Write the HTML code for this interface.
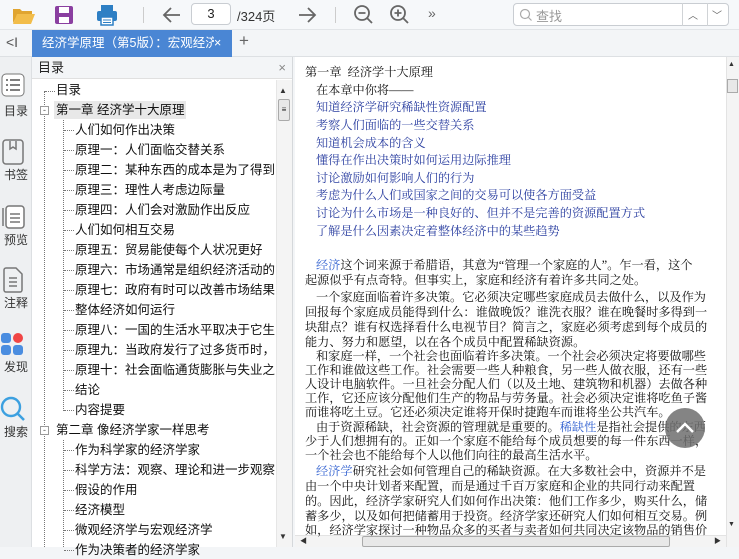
<!DOCTYPE html>
<html><head><meta charset="utf-8"><style>
*{margin:0;padding:0;box-sizing:border-box}
body{width:739px;height:547px;overflow:hidden;background:#f3f5f7;font-family:"Liberation Sans","Noto Sans CJK SC",sans-serif;position:relative;font-size:12px;color:#222}
.abs{position:absolute}
#tb{left:0;top:0;width:739px;height:30px;background:#f6f8fa;border-bottom:1px solid #e2e5e8}
#tabs{left:0;top:30px;width:739px;height:27px;background:#f3f5f7;border-bottom:1px solid #dde0e3}
#tab{left:32px;top:30px;width:200px;height:27px;background:#4a86d4;color:#fff;font-size:12.5px;line-height:27px;padding-left:10px;white-space:nowrap;overflow:hidden}
#rail{left:0;top:57px;width:32px;height:490px;background:#eef0f2;border-right:1px solid #dcdfe2}
.rl{position:absolute;left:0;width:32px;text-align:center;font-size:12px;color:#333}
#toc{left:32px;top:57px;width:261px;height:490px;background:#fff;border-right:1px solid #d5d8db}
#toch{left:32px;top:57px;width:260px;height:22px;background:#f3f5f7;border-bottom:1px solid #e0e0e0;font-size:13px;line-height:22px;padding-left:6px}
.ti{position:absolute;font-size:12.5px;white-space:nowrap;color:#111;line-height:18px}
.dot{position:absolute;border-top:1px dotted #777;width:10px}
#doc{left:295px;top:57px;width:431px;height:478px;background:#fff}
.dl{position:absolute;left:305px;font-family:"Liberation Serif","Noto Serif CJK SC",serif;font-size:12.2px;white-space:nowrap;color:#111;line-height:14px}
.b{color:#2a3ea0}
.k{color:#3060d0}
</style></head><body>
<div id="tb" class="abs"></div>
<svg class="abs" style="left:12px;top:5px" width="24" height="20"><path d="M1 4h7l2 2h10v3H6L1 18z" fill="#e0a530"/><path d="M5 9h18l-4 10H1z" fill="#f2bd4a"/></svg>
<svg class="abs" style="left:54px;top:5px" width="20" height="20"><rect x="1" y="1" width="18" height="18" rx="2" fill="#8a3fa0"/><rect x="5" y="2" width="10" height="6" fill="#fff"/><rect x="5" y="12" width="10" height="6" fill="#fff"/></svg>
<svg class="abs" style="left:96px;top:4px" width="22" height="22"><rect x="5" y="1" width="12" height="6" fill="#2d7fc4"/><rect x="1" y="7" width="20" height="10" rx="2" fill="#2d7fc4"/><rect x="5" y="13" width="12" height="8" fill="#fff" stroke="#2d7fc4" stroke-width="1.5"/><line x1="7" y1="16" x2="15" y2="16" stroke="#2d7fc4"/><line x1="7" y1="18.5" x2="15" y2="18.5" stroke="#2d7fc4"/></svg>
<div class="abs" style="left:143px;top:7px;width:1px;height:16px;background:#ccc"></div>
<svg class="abs" style="left:162px;top:6px" width="20" height="18"><path d="M18 9H3M9 2L2 9l7 7" fill="none" stroke="#666" stroke-width="1.8"/></svg>
<div class="abs" style="left:191px;top:3px;width:40px;height:22px;border:1px solid #c9cdd2;border-radius:4px;background:#fff;text-align:center;line-height:20px;font-size:13px">3</div>
<div class="abs" style="left:237px;top:6px;font-size:13px;color:#333">/324页</div>
<svg class="abs" style="left:297px;top:6px" width="20" height="18"><path d="M2 9h15M11 2l7 7-7 7" fill="none" stroke="#666" stroke-width="1.8"/></svg>
<div class="abs" style="left:335px;top:7px;width:1px;height:16px;background:#ccc"></div>
<svg class="abs" style="left:353px;top:4px" width="22" height="22"><circle cx="9" cy="9" r="7" fill="none" stroke="#666" stroke-width="1.8"/><path d="M5.5 9h7M14 14l5 5" stroke="#666" stroke-width="1.8"/></svg>
<svg class="abs" style="left:389px;top:4px" width="22" height="22"><circle cx="9" cy="9" r="7" fill="none" stroke="#666" stroke-width="1.8"/><path d="M5.5 9h7M9 5.5v7M14 14l5 5" stroke="#666" stroke-width="1.8"/></svg>
<div class="abs" style="left:428px;top:5px;font-size:14px;color:#666">»</div>
<div class="abs" style="left:513px;top:3px;width:216px;height:23px;border:1px solid #c9cdd2;border-radius:4px;background:#fff"></div>
<svg class="abs" style="left:519px;top:8px" width="14" height="14"><circle cx="6" cy="6" r="4.5" fill="none" stroke="#aaa" stroke-width="1.2"/><path d="M9.5 9.5l3 3" stroke="#aaa" stroke-width="1.2"/></svg>
<div class="abs" style="left:536px;top:6px;font-size:13px;color:#999">查找</div>
<div class="abs" style="left:682px;top:3px;width:1px;height:23px;background:#d0d3d6"></div>
<div class="abs" style="left:707px;top:3px;width:1px;height:23px;background:#d0d3d6"></div>
<div class="abs" style="left:688px;top:7px;font-size:10px;color:#666">︿</div>
<div class="abs" style="left:712px;top:7px;font-size:10px;color:#666">﹀</div>
<div id="tabs" class="abs"></div>
<div class="abs" style="left:6px;top:34px;font-size:14px;color:#555">&lt;I</div>
<div id="tab" class="abs">经济学原理（第5版）：宏观经济学 <span style="position:absolute;right:0;top:0;width:18px;background:#4a86d4">×</span></div>
<div class="abs" style="left:239px;top:31px;font-size:17px;color:#666">+</div>
<div id="rail" class="abs"></div>
<svg class="abs" style="left:1px;top:73px" width="24" height="24"><rect x="1" y="1" width="22" height="22" rx="4" fill="#fff" stroke="#777"/><path d="M5 7h2M9 7h10M5 12h2M9 12h10M5 17h2M9 17h10" stroke="#555" stroke-width="1.6"/></svg>
<div class="rl" style="top:102px">目录</div>
<svg class="abs" style="left:2px;top:139px" width="22" height="26"><rect x="1" y="1" width="20" height="24" rx="3" fill="none" stroke="#777" stroke-width="1.5"/><path d="M8 2v8l3-2 3 2V2" fill="none" stroke="#777" stroke-width="1.5"/></svg>
<div class="rl" style="top:166px">书签</div>
<svg class="abs" style="left:1px;top:203px" width="24" height="26"><rect x="5" y="3" width="18" height="22" rx="3" fill="#fff" stroke="#777" stroke-width="1.5"/><path d="M2 5v18M9 11h10M9 15h10M9 19h10" stroke="#777" stroke-width="1.5"/></svg>
<div class="rl" style="top:231px">预览</div>
<svg class="abs" style="left:2px;top:267px" width="22" height="26"><path d="M2 3a2 2 0 012-2h10l6 6v16a2 2 0 01-2 2H4a2 2 0 01-2-2z" fill="none" stroke="#777" stroke-width="1.5"/><path d="M7 11h8M7 15h8M7 19h8" stroke="#777" stroke-width="1.5"/></svg>
<div class="rl" style="top:294px">注释</div>
<svg class="abs" style="left:0px;top:332px" width="24" height="24"><rect x="1" y="1" width="10" height="10" rx="3" fill="#4a8de0"/><circle cx="18" cy="6" r="5" fill="#f04545"/><rect x="1" y="13" width="10" height="10" rx="3" fill="#4a8de0"/><rect x="13" y="13" width="10" height="10" rx="3" fill="#4a8de0"/></svg>
<div class="rl" style="top:358px">发现</div>
<svg class="abs" style="left:0px;top:396px" width="26" height="26"><circle cx="11" cy="11" r="9" fill="none" stroke="#3ca0e0" stroke-width="2.4"/><path d="M18 18l6 6" stroke="#3ca0e0" stroke-width="2.6"/></svg>
<div class="rl" style="top:423px">搜索</div>
<div id="toc" class="abs"></div>
<div id="toch" class="abs">目录<span style="position:absolute;right:6px;color:#888">×</span></div>
<div class="abs" style="left:276px;top:80px;width:16px;height:467px;background:#f4f4f4;border-left:1px solid #e6e6e6"></div>
<div class="abs" style="left:279px;top:86px;font-size:8px;color:#333">▲</div>
<div class="abs" style="left:278px;top:99px;width:12px;height:22px;background:#e8e8e8;border:1px solid #aaa;border-radius:2px;font-size:8px;text-align:center;line-height:20px">≡</div>
<div class="abs" style="left:279px;top:532px;font-size:8px;color:#333">▼</div>
<div class="abs" style="left:44px;top:91px;height:456px;border-left:1px dotted #777"></div>
<div class="abs" style="left:63px;top:120px;height:291px;border-left:1px dotted #777"></div>
<div class="abs" style="left:63px;top:440px;height:107px;border-left:1px dotted #777"></div>
<div class="dot" style="left:45px;top:91px"></div>
<div class="abs" style="left:40px;top:106px;width:9px;height:9px;border:1px solid #999;background:#fff;font-size:9px;line-height:6px;text-align:center;color:#555">-</div>
<div class="abs" style="left:40px;top:426px;width:9px;height:9px;border:1px solid #999;background:#fff;font-size:9px;line-height:6px;text-align:center;color:#555">-</div>
<div class="ti" style="left:56px;top:81px">目录</div>
<div class="ti" style="left:54px;top:101px;background:#e8e8e8;padding:0 2px">第一章 经济学十大原理</div>
<div id="rows"></div>
<div class="ti" style="left:56px;top:421px">第二章 像经济学家一样思考</div>
<script>
var a=["人们如何作出决策","原理一：人们面临交替关系","原理二：某种东西的成本是为了得到它","原理三：理性人考虑边际量","原理四：人们会对激励作出反应","人们如何相互交易","原理五：贸易能使每个人状况更好","原理六：市场通常是组织经济活动的一","原理七：政府有时可以改善市场结果","整体经济如何运行","原理八：一国的生活水平取决于它生产","原理九：当政府发行了过多货币时，物","原理十：社会面临通货膨胀与失业之间","结论","内容提要"];
var b=["作为科学家的经济学家","科学方法：观察、理论和进一步观察","假设的作用","经济模型","微观经济学与宏观经济学","作为决策者的经济学家"];
var h="";
function row(t,y){h+='<div class="dot" style="left:64px;top:'+(y+9)+'px"></div><div class="ti" style="left:75px;top:'+y+'px;max-width:200px;overflow:hidden">'+t+'</div>';}
a.forEach(function(t,i){row(t,121+i*20)});
b.forEach(function(t,i){row(t,441+i*20)});
document.getElementById("rows").outerHTML=h;
</script>
<div id="doc" class="abs"></div>
<div class="abs" style="left:726px;top:57px;width:13px;height:490px;background:#f4f4f4;border-left:1px solid #e3e3e3"></div>
<div class="abs" style="left:728px;top:61px;font-size:7px;color:#333">▲</div>
<div class="abs" style="left:727px;top:79px;width:11px;height:14px;background:#e8e8e8;border:1px solid #aaa"></div>
<div class="abs" style="left:728px;top:521px;font-size:7px;color:#333">▼</div>
<div class="abs" style="left:295px;top:535px;width:431px;height:12px;background:#f4f4f4;border-top:1px solid #e3e3e3"></div>
<div class="abs" style="left:362px;top:536px;width:308px;height:11px;background:#e8e8e8;border:1px solid #aaa;border-radius:2px"></div>
<div class="abs" style="left:300px;top:536px;font-size:7px;color:#333">◀</div>
<div class="abs" style="left:714px;top:536px;font-size:7px;color:#333">▶</div>
<div class="dl" style="top:65px">第一章&nbsp; 经济学十大原理</div>
<div class="dl" style="top:83px;left:316px">在本章中你将——</div>
<div class="dl b" style="top:100px;left:316px">知道经济学研究稀缺性资源配置</div>
<div class="dl b" style="top:118px;left:316px">考察人们面临的一些交替关系</div>
<div class="dl b" style="top:136px;left:316px">知道机会成本的含义</div>
<div class="dl b" style="top:153px;left:316px">懂得在作出决策时如何运用边际推理</div>
<div class="dl b" style="top:171px;left:316px">讨论激励如何影响人们的行为</div>
<div class="dl b" style="top:188px;left:316px">考虑为什么人们或国家之间的交易可以使各方面受益</div>
<div class="dl b" style="top:206px;left:316px">讨论为什么市场是一种良好的、但并不是完善的资源配置方式</div>
<div class="dl b" style="top:224px;left:316px">了解是什么因素决定着整体经济中的某些趋势</div>
<div class="dl" style="top:258px;left:316px"><span class="k">经济</span>这个词来源于希腊语，其意为“管理一个家庭的人”。乍一看，这个</div>
<div class="dl" style="top:273px">起源似乎有点奇特。但事实上，家庭和经济有着许多共同之处。</div>
<div class="dl" style="top:290px;left:316px">一个家庭面临着许多决策。它必须决定哪些家庭成员去做什么，以及作为</div>
<div class="dl" style="top:305px">回报每个家庭成员能得到什么：谁做晚饭？谁洗衣服？谁在晚餐时多得到一</div>
<div class="dl" style="top:320px">块甜点？谁有权选择看什么电视节目？简言之，家庭必须考虑到每个成员的</div>
<div class="dl" style="top:335px">能力、努力和愿望，以在各个成员中配置稀缺资源。</div>
<div class="dl" style="top:349px;left:316px">和家庭一样，一个社会也面临着许多决策。一个社会必须决定将要做哪些</div>
<div class="dl" style="top:363px">工作和谁做这些工作。社会需要一些人种粮食，另一些人做衣服，还有一些</div>
<div class="dl" style="top:377px">人设计电脑软件。一旦社会分配人们（以及土地、建筑物和机器）去做各种</div>
<div class="dl" style="top:391px">工作，它还应该分配他们生产的物品与劳务量。社会必须决定谁将吃鱼子酱</div>
<div class="dl" style="top:405px">而谁将吃土豆。它还必须决定谁将开保时捷跑车而谁将坐公共汽车。</div>
<div class="dl" style="top:420px;left:316px">由于资源稀缺，社会资源的管理就是重要的。<span class="k">稀缺性</span>是指社会提供的东西</div>
<div class="dl" style="top:434px">少于人们想拥有的。正如一个家庭不能给每个成员想要的每一件东西一样，</div>
<div class="dl" style="top:448px">一个社会也不能给每个人以他们向往的最高生活水平。</div>
<div class="dl" style="top:464px;left:316px"><span class="k">经济学</span>研究社会如何管理自己的稀缺资源。在大多数社会中，资源并不是</div>
<div class="dl" style="top:479px">由一个中央计划者来配置，而是通过千百万家庭和企业的共同行动来配置</div>
<div class="dl" style="top:494px">的。因此，经济学家研究人们如何作出决策：他们工作多少，购买什么，储</div>
<div class="dl" style="top:509px">蓄多少，以及如何把储蓄用于投资。经济学家还研究人们如何相互交易。例</div>
<div class="dl" style="top:523px">如，经济学家探讨一种物品众多的买者与卖者如何共同决定该物品的销售价</div>
<div class="abs" style="left:665px;top:408px;width:40px;height:40px;border-radius:50%;background:rgba(110,110,110,.85)"></div>
<svg class="abs" style="left:673px;top:416px" width="24" height="24"><path d="M4 16l8-8 8 8" fill="none" stroke="#fff" stroke-width="2.5"/></svg>
</body></html>
